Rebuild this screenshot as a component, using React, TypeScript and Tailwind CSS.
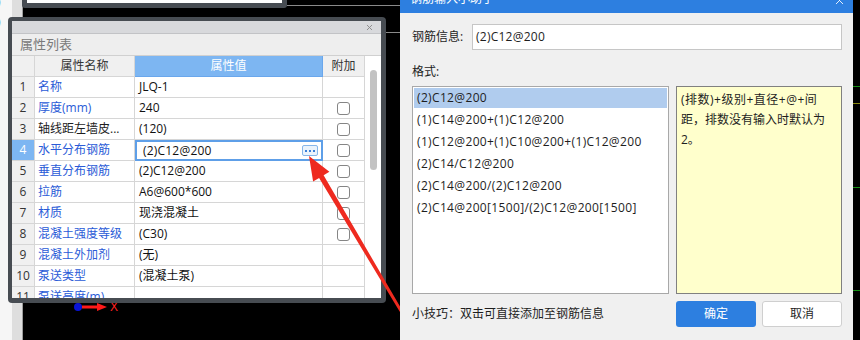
import React from 'react';
import { X } from 'lucide-react';

type Row = {
  no: number;
  name: string;
  value: string;
  check: boolean;
  plain?: boolean;
  active?: boolean;
};

const rows: Row[] = [
  { no: 1, name: '名称', value: 'JLQ-1', check: false },
  { no: 2, name: '厚度(mm)', value: '240', check: true },
  { no: 3, name: '轴线距左墙皮...', value: '(120)', check: true, plain: true },
  { no: 4, name: '水平分布钢筋', value: '(2)C12@200', check: true, active: true },
  { no: 5, name: '垂直分布钢筋', value: '(2)C12@200', check: true },
  { no: 6, name: '拉筋', value: 'A6@600*600', check: true },
  { no: 7, name: '材质', value: '现浇混凝土', check: true },
  { no: 8, name: '混凝土强度等级', value: '(C30)', check: true },
  { no: 9, name: '混凝土外加剂', value: '(无)', check: false },
  { no: 10, name: '泵送类型', value: '(混凝土泵)', check: false },
  { no: 11, name: '泵送高度(m)', value: '', check: false },
];

const formats = [
  '(2)C12@200',
  '(1)C14@200+(1)C12@200',
  '(1)C12@200+(1)C10@200+(1)C12@200',
  '(2)C14/C12@200',
  '(2)C14@200/(2)C12@200',
  '(2)C14@200[1500]/(2)C12@200[1500]',
];

const Checkbox = () => (
  <span className="block h-[13px] w-[13px] rounded-[3px] border border-[#858585] bg-white" />
);

function PropertyPanel() {
  return (
    <div className="absolute left-[8px] top-[17px] h-[286px] w-[378px] rounded-[4px] bg-[#474c52] pb-[5px] pl-[4px] pr-[5px] pt-[4px]">
      <div className="flex h-full flex-col bg-[#eeeeee]">
        <div className="flex h-[13px] items-center justify-end border-b border-[#c2c3c6] bg-[#d8d9dc] pr-[7px]">
          <X size={9} strokeWidth={2.5} className="text-[#8a8a8a]" />
        </div>
        <div className="flex h-[22px] items-center border-b border-[#d0d0d0] pl-[8px] text-[13px] text-[#7a7a7a]">
          属性列表
        </div>
        <div className="flex min-h-0 flex-1 overflow-hidden">
          <div className="grid w-[353px] auto-rows-[21px] grid-cols-[23px_100px_188px_42px] content-start">
            <div className="border-b border-r border-[#d6d6d6] bg-[#f0f0f0]" />
            <div className="flex items-center justify-center border-b border-r border-[#d6d6d6] bg-[#f0f0f0] text-[#333]">
              属性名称
            </div>
            <div className="flex items-center justify-center border-b border-r border-[#6aa7ec] bg-[#7db6f2] text-white">
              属性值
            </div>
            <div className="flex items-center justify-center border-b border-r border-[#d6d6d6] bg-[#f0f0f0] text-[#333]">
              附加
            </div>

            {rows.map((r) => (
              <React.Fragment key={r.no}>
                <div
                  className={`flex items-center justify-center border-b border-r border-[#d6d6d6] ${
                    r.active ? 'bg-[#7db6f2] text-white' : 'bg-[#f0f0f0] text-[#333]'
                  }`}
                >
                  {r.no}
                </div>
                <div
                  className={`flex items-center overflow-hidden whitespace-nowrap border-b border-r border-[#d6d6d6] bg-white pl-[3px] ${
                    r.plain ? 'text-[#1e1e1e]' : 'text-[#2a5bd7]'
                  }`}
                >
                  {r.name}
                </div>
                {r.active ? (
                  <div className="relative flex items-center border-2 border-[#5e9fe8] bg-white pl-[6px] tracking-[0.2px] text-[#111]">
                    {r.value}
                    <span className="absolute right-[3px] top-[3px] flex h-[11px] w-[16px] items-center justify-center gap-[2px] rounded-[2px] border border-[#86b6ea] bg-[#eaf3fc]">
                      <i className="block h-[2px] w-[2px] bg-[#3a7fd8]" />
                      <i className="block h-[2px] w-[2px] bg-[#3a7fd8]" />
                      <i className="block h-[2px] w-[2px] bg-[#3a7fd8]" />
                    </span>
                  </div>
                ) : (
                  <div className="flex items-center whitespace-nowrap border-b border-r border-[#d6d6d6] bg-white pl-[4px] text-[#111]">
                    {r.value}
                  </div>
                )}
                <div className="flex items-center justify-center border-b border-r border-[#d6d6d6] bg-white">
                  {r.check && <Checkbox />}
                </div>
              </React.Fragment>
            ))}
          </div>
          <div className="w-[16px] bg-white pl-[5px] pt-[14px]">
            <div className="h-[100px] w-[7px] rounded-full bg-[#c3c3c3]" />
          </div>
        </div>
      </div>
    </div>
  );
}

function RebarDialog() {
  return (
    <div className="absolute left-[400px] top-0 flex h-[340px] w-[453px] flex-col bg-[#f0f0f0] text-[#1e1e1e]">
      <div className="relative h-[13px] overflow-hidden bg-[#2d7fe0]">
        <div className="-mt-[7px] pl-[10px] leading-[12px] text-white">钢筋输入小助手</div>
        <X size={13} strokeWidth={1.6} className="absolute -top-[6px] right-[7px] text-white" />
      </div>
      <div className="flex flex-1 flex-col pl-[12px] pr-[11px] pt-[11px]">
        <div className="flex h-[26px] items-center">
          <span className="w-[60px]">钢筋信息:</span>
          <div className="flex h-full flex-1 items-center border border-[#c6c6c6] bg-white pl-[3px] tracking-[0.25px]">
            (2)C12@200
          </div>
        </div>
        <div className="mt-[14px] leading-[16px]">格式:</div>
        <div className="mt-[6px] flex h-[208px] gap-[7px]">
          <div className="w-[257px] border border-[#a8a8a8] bg-white p-[1px]">
            {formats.map((f, i) => (
              <div
                key={f}
                className={`mb-[2px] flex h-[20px] items-center whitespace-nowrap pl-[3px] tracking-[0.35px] ${
                  i === 0 ? 'bg-[#b0ccee]' : ''
                }`}
              >
                {f}
              </div>
            ))}
          </div>
          <div className="flex-1 border border-[#808080] bg-[#ffffcc] pl-[4px] pt-[3px] leading-[20px]">
            <span className="tracking-[0.5px]">(排数)+级别+直径+@+间</span>
            <br />
            距，排数没有输入时默认为
            <br />
            2。
          </div>
        </div>
        <div className="mt-[7px] flex h-[26px] items-center">
          <span className="w-[264px]">小技巧：双击可直接添加至钢筋信息</span>
          <button className="h-full w-[80px] rounded-[3px] bg-[#2d7fe0] text-white">确定</button>
          <button className="ml-[6px] h-full w-[80px] rounded-[3px] border border-[#cfcfcf] bg-white">
            取消
          </button>
        </div>
      </div>
    </div>
  );
}

export default function App() {
  return (
    <div className="relative h-[340px] w-[860px] overflow-hidden bg-black font-['Open_Sans','Noto_Sans_CJK_SC',sans-serif] text-[12px]">
      {/* left strip of the main window */}
      <div className="absolute left-0 top-0 flex h-full w-[23px] border-r border-[#9c9c9c] bg-[#f6f6f6]">
        <div className="relative w-[12px] overflow-hidden">
          <div className="absolute -left-[3px] -top-[8px] leading-[20px] text-[#2a5bd7]">
            )<br />)
          </div>
        </div>
        <div className="flex-1 bg-[#dedede]" />
      </div>

      {/* window peeking in at the top */}
      <div className="absolute left-[22px] top-0 h-[8px] w-[265px] rounded-b-[3px] bg-[#474c52] px-[5px]">
        <div className="h-[3px] bg-white" />
      </div>
      <div className="absolute left-[287px] top-[5px] h-px w-[113px] bg-[#8a8a8a]" />
      <div className="absolute left-[386px] top-[32px] h-px w-[14px] bg-[#8a8a8a]" />

      {/* axis marker */}
      <svg className="absolute left-[72px] top-[300px]" width="40" height="14" viewBox="0 0 40 14">
        <circle cx="6" cy="7" r="4" fill="#0a14d6" />
        <line x1="10" y1="7" x2="27" y2="7" stroke="#ff1a1a" strokeWidth="3" />
        <polygon points="25,3 35,7 25,11" fill="#ff1a1a" />
      </svg>
      <span className="absolute left-[110px] top-[299px] font-['Liberation_Sans',sans-serif] text-[12px] leading-[16px] text-[#ff2020]">
        X
      </span>

      <PropertyPanel />

      {/* annotation arrow */}
      <svg className="pointer-events-none absolute left-0 top-0" width="860" height="340" viewBox="0 0 860 340">
        <polygon
          points="309,156 329.4,171.8 323.6,175.2 402.2,310.3 399.8,311.7 319.1,178.0 313.1,181.5"
          fill="#ee2a1f"
        />
      </svg>

      <RebarDialog />

      {/* canvas lines at the right edge */}
      <div className="absolute left-[853px] top-[86px] h-px w-[7px] bg-[#159015]" />
      <div className="absolute left-[853px] top-[103px] h-px w-[7px] bg-[#8a8a10]" />
      <div className="absolute left-[853px] top-[187px] h-px w-[7px] bg-[#159015]" />
      <div className="absolute left-[853px] top-[290px] h-px w-[7px] bg-[#159015]" />
    </div>
  );
}
